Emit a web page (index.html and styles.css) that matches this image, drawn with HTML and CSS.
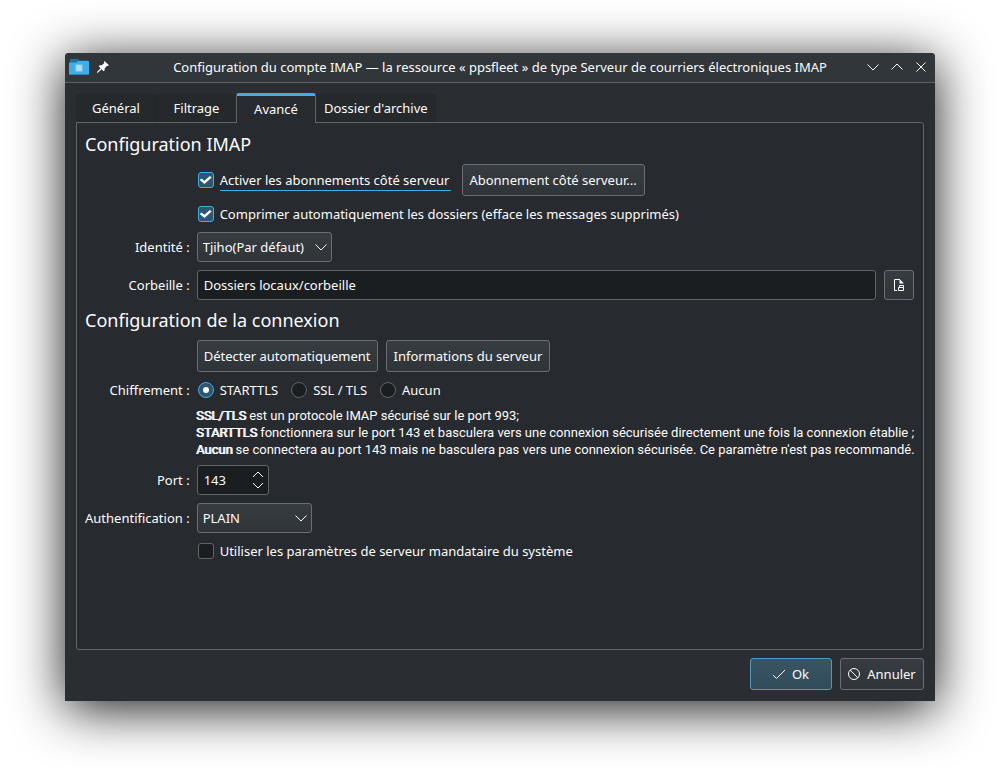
FILE: index.html
```html
<!DOCTYPE html>
<html lang="fr">
<head>
<meta charset="utf-8">
<meta name="viewport" content="width=device-width, initial-scale=1">
<title>Configuration du compte IMAP</title>
<link rel="stylesheet" href="styles.css">
</head>
<body>
<main class="window">
  <header class="titlebar">
    <div class="titlebar-side">
      <svg class="app-icon" width="20" height="18" viewBox="0 0 20 18" aria-hidden="true">
        <path d="M1 1h8l1 1.500h9v6H1z" fill="#266f99"/>
        <path d="M0 4.500h7l2-1.500h11v14H0z" fill="#3daee9"/>
        <path d="M0 16h20v1H0z" fill="#2f86b5"/>
        <path d="M6.500 6.500h7v7h-7z" fill="#8fd0f2"/>
        <path d="M7.500 8h4M7.500 10h5M7.500 12h5" stroke="#d5edf9"/>
      </svg>
      <button class="title-button" type="button" aria-label="Épingler">
        <svg width="12" height="12" viewBox="0 0 12 12"><path d="M7.500 0L12 4.200 10.800 5 10 4.800 7.800 7.200 7.600 9.200 6.600 10.200 4.600 8.200.8 11.700H0V11L3.600 7.200 1.700 5.300 2.700 4.300 4.800 4.200 7.200 2 7 1z" fill="#fcfcfc"/></svg>
      </button>
    </div>
    <h1 class="title">Configuration du compte IMAP — la ressource « ppsfleet » de type Serveur de courriers électroniques IMAP</h1>
    <div class="titlebar-side titlebar-actions">
      <button class="title-button" type="button" aria-label="Réduire"><svg class="line-icon" width="12" height="12" viewBox="0 0 12 12"><path d="M.5 3.500L6 9l5.500-5.500"/></svg></button>
      <button class="title-button" type="button" aria-label="Agrandir"><svg class="line-icon" width="12" height="12" viewBox="0 0 12 12"><path d="M.5 8.500L6 3l5.500 5.500"/></svg></button>
      <button class="title-button" type="button" aria-label="Fermer"><svg class="line-icon" width="12" height="12" viewBox="0 0 12 12"><path d="M1.500 1.500l9 9M10.500 1.500l-9 9"/></svg></button>
    </div>
  </header>

  <form class="content">
    <nav class="tabs" role="tablist">
      <button class="tab" type="button" role="tab">Général</button>
      <button class="tab" type="button" role="tab">Filtrage</button>
      <button class="tab tab-active" type="button" role="tab" aria-selected="true">Avancé</button>
      <button class="tab" type="button" role="tab">Dossier d'archive</button>
    </nav>

    <section class="panel">
      <h2 class="heading">Configuration IMAP</h2>
      <div class="field field-wide">
        <label class="choice choice-focus"><input class="check" type="checkbox" checked><span class="choice-text">Activer les abonnements côté serveur</span></label>
        <button class="button" type="button">Abonnement côté serveur...</button>
      </div>
      <div class="field">
        <label class="choice"><input class="check" type="checkbox" checked><span class="choice-text">Comprimer automatiquement les dossiers (efface les messages supprimés)</span></label>
      </div>
      <label class="label" for="identity">Identité :</label>
      <div class="field">
        <div class="combo combo-identity">
          <select class="control select" id="identity"><option>Tjiho(Par défaut)</option></select>
          <svg class="line-icon combo-icon" width="12" height="12" viewBox="0 0 12 12"><path d="M.5 3.500L6 9l5.500-5.500"/></svg>
        </div>
      </div>
      <label class="label" for="trash">Corbeille :</label>
      <div class="field">
        <input class="control text" id="trash" type="text" value="Dossiers locaux/corbeille">
        <button class="button button-square" type="button" aria-label="Choisir un dossier">
          <svg width="12" height="14" viewBox="0 0 12 14"><path d="M4 12.500H1.500v-11H7" fill="none" stroke="#fcfcfc"/><path d="M6.500 1L11 5.500H6.500z" fill="#fcfcfc"/><path d="M5.500 9.500h5v3h-5zM6.500 9.500v-2h4v2" fill="none" stroke="#fcfcfc"/></svg>
        </button>
      </div>

      <h2 class="heading">Configuration de la connexion</h2>
      <div class="field">
        <button class="button" type="button">Détecter automatiquement</button>
        <button class="button" type="button">Informations du serveur</button>
      </div>
      <span class="label" id="encryption">Chiffrement :</span>
      <div class="field field-radios" role="radiogroup" aria-labelledby="encryption">
        <label class="choice"><input class="radio" type="radio" name="encryption" checked><span class="choice-text">STARTTLS</span></label>
        <label class="choice"><input class="radio" type="radio" name="encryption"><span class="choice-text">SSL / TLS</span></label>
        <label class="choice"><input class="radio" type="radio" name="encryption"><span class="choice-text">Aucun</span></label>
      </div>
      <p class="note"><b>SSL/TLS</b> est un protocole IMAP sécurisé sur le port 993;<br><b>STARTTLS</b> fonctionnera sur le port 143 et basculera vers une connexion sécurisée directement une fois la connexion établie ;<br><b>Aucun</b> se connectera au port 143 mais ne basculera pas vers une connexion sécurisée. Ce paramètre n'est pas recommandé.</p>
      <label class="label" for="port">Port :</label>
      <div class="field">
        <div class="combo combo-port">
          <input class="control text" id="port" type="number" value="143">
          <svg class="line-icon combo-icon" width="12" height="20" viewBox="0 0 12 20"><path d="M1 7l5-5 5 5M1 13l5 5 5-5"/></svg>
        </div>
      </div>
      <label class="label" for="auth">Authentification :</label>
      <div class="field">
        <div class="combo combo-auth">
          <select class="control select" id="auth"><option>PLAIN</option></select>
          <svg class="line-icon combo-icon" width="12" height="12" viewBox="0 0 12 12"><path d="M.5 3.500L6 9l5.500-5.500"/></svg>
        </div>
      </div>
      <div class="field">
        <label class="choice"><input class="check" type="checkbox"><span class="choice-text">Utiliser les paramètres de serveur mandataire du système</span></label>
      </div>
    </section>

    <footer class="footer">
      <button class="button button-primary" type="button"><svg class="line-icon" width="14" height="14" viewBox="0 0 14 14"><path d="M1 8l3.500 3.500L13 3"/></svg>Ok</button>
      <button class="button button-cancel" type="button"><svg class="line-icon" width="14" height="14" viewBox="0 0 14 14"><circle cx="7" cy="7" r="5.500"/><path d="M3 3l8 8"/></svg>Annuler</button>
    </footer>
  </form>
</main>
</body>
</html>
```
FILE: styles.css
```css
* {
  box-sizing: border-box;
}

body {
  display: flex;
  min-height: 100vh;
  margin: 0;
  padding: 53px 65px 77px;
  background: #fff;
  color: #fcfcfc;
  font: 13px/18px "Noto Sans", sans-serif;
}

button,
input,
select {
  margin: 0;
  color: inherit;
  font: inherit;
}

.window {
  display: flex;
  flex: 1;
  flex-direction: column;
  min-width: 0;
  border-radius: 4px 4px 0 0;
  background: #2a2e32;
  box-shadow: 0 8px 52px rgba(0, 0, 0, 0.9);
}

.titlebar {
  display: flex;
  align-items: center;
  height: 30px;
  padding: 0 8px 2px 4px;
  border-bottom: 1px solid #616569;
  border-radius: 4px 4px 0 0;
  background: #31363b;
}

.titlebar-side {
  display: flex;
  align-items: center;
  gap: 8px;
  width: 68px;
}

.titlebar-actions {
  gap: 12px;
  justify-content: flex-end;
  width: 64px;
}

.title {
  flex: 1;
  margin: 0;
  font-size: 13px;
  font-weight: 400;
  text-align: center;
  white-space: nowrap;
}

.title-button {
  display: flex;
  padding: 0;
  border: 0;
  background: none;
}

.line-icon {
  fill: none;
  stroke: #fcfcfc;
}

.content {
  display: flex;
  flex: 1;
  flex-direction: column;
  padding: 10px 11px 11px;
}

.tabs {
  display: flex;
  align-items: flex-end;
}

.tab {
  min-width: 80px;
  height: 28px;
  padding: 0 8px;
  border: 0;
  border-left: 1px solid #212529;
  background: #25292c;
}

.tab:first-child {
  border-left: 0;
  border-radius: 4px 0 0 0;
}

.tab:last-child {
  border-left: 0;
  border-radius: 0 4px 0 0;
}

.tab-active {
  z-index: 1;
  height: 30px;
  margin-bottom: -1px;
  padding-bottom: 2px;
  border: 1px solid #616569;
  border-top: 3px solid #3daee9;
  border-bottom: 0;
  border-radius: 3px 3px 0 0;
  background: #272a2e;
}

.panel {
  display: grid;
  flex: 1;
  grid-template-columns: max-content minmax(0, 1fr);
  align-content: start;
  align-items: center;
  gap: 8px 7px;
  padding: 9px 9px 9px 8px;
  border: 1px solid #616569;
  border-radius: 0 3px 3px 3px;
  background: #272a2e;
}

.heading {
  grid-column: 1 / -1;
  margin: 0;
  font-size: 18px;
  font-weight: 400;
  line-height: 24px;
}

.label {
  text-align: right;
}

.field {
  display: flex;
  grid-column: 2;
  align-items: center;
  gap: 8px;
}

.field-wide {
  gap: 11px;
}

.field-radios {
  gap: 10px;
}

.button {
  display: flex;
  align-items: center;
  justify-content: center;
  gap: 6px;
  height: 32px;
  padding: 0 7px 0 6px;
  border: 1px solid #6b6f73;
  border-radius: 3px;
  background: linear-gradient(#373c40, #2f3438);
  white-space: nowrap;
}

.button-square {
  flex: none;
  width: 30px;
  height: 30px;
  padding: 0;
}

.choice {
  display: flex;
  align-items: center;
  gap: 6px;
  height: 20px;
  padding-left: 1px;
}

.choice-text {
  padding: 1px 2px 1px 0;
  border-bottom: 1px solid transparent;
  border-top: 1px solid transparent;
}

.choice-focus .choice-text {
  border-bottom-color: #3daee9;
}

.check,
.radio {
  display: grid;
  flex: none;
  width: 16px;
  height: 16px;
  border: 1px solid #616569;
  appearance: none;
  background: #1b1e20;
  place-items: center;
}

.check {
  border-radius: 3px;
}

.radio {
  border-radius: 50%;
}

.check:checked,
.radio:checked {
  border-color: #3daee9;
  background: #2e566d;
}

.check:checked::before {
  width: 12px;
  height: 8px;
  background: #fcfcfc;
  clip-path: polygon(0 50%, 15% 30%, 40% 60%, 85% 0, 100% 20%, 40% 100%);
  content: "";
}

.radio:checked::before {
  width: 6px;
  height: 6px;
  border-radius: 50%;
  background: #fcfcfc;
  content: "";
}

.combo {
  display: grid;
  align-items: center;
}

.combo > * {
  grid-area: 1 / 1;
}

.combo-identity {
  width: 135px;
}

.combo-port {
  width: 72px;
}

.combo-auth {
  width: 115px;
}

.combo-icon {
  margin-right: 5px;
  justify-self: end;
  pointer-events: none;
}

.control {
  width: 100%;
  min-width: 0;
  height: 30px;
  padding: 0 6px;
  border: 1px solid #616569;
  border-radius: 3px;
  appearance: none;
}

.select {
  padding: 0 5px;
  border-color: #6b6f73;
  background: linear-gradient(#373c40, #2f3438);
}

.text {
  background: #1b1e20;
}

.text[type="number"] {
  appearance: textfield;
}

.note {
  grid-column: 2;
  margin: -1px;
  font: 13px/17px Roboto, sans-serif;
  white-space: nowrap;
}

.note b {
  font-weight: 400;
  text-shadow: 1px 0 currentColor;
}

.footer {
  display: flex;
  gap: 8px;
  justify-content: flex-end;
  margin-top: 8px;
}

.button-primary {
  min-width: 82px;
  border-color: #5398be;
  background: linear-gradient(#3a5465, #304b5a);
}

.button-cancel {
  min-width: 84px;
}
```
